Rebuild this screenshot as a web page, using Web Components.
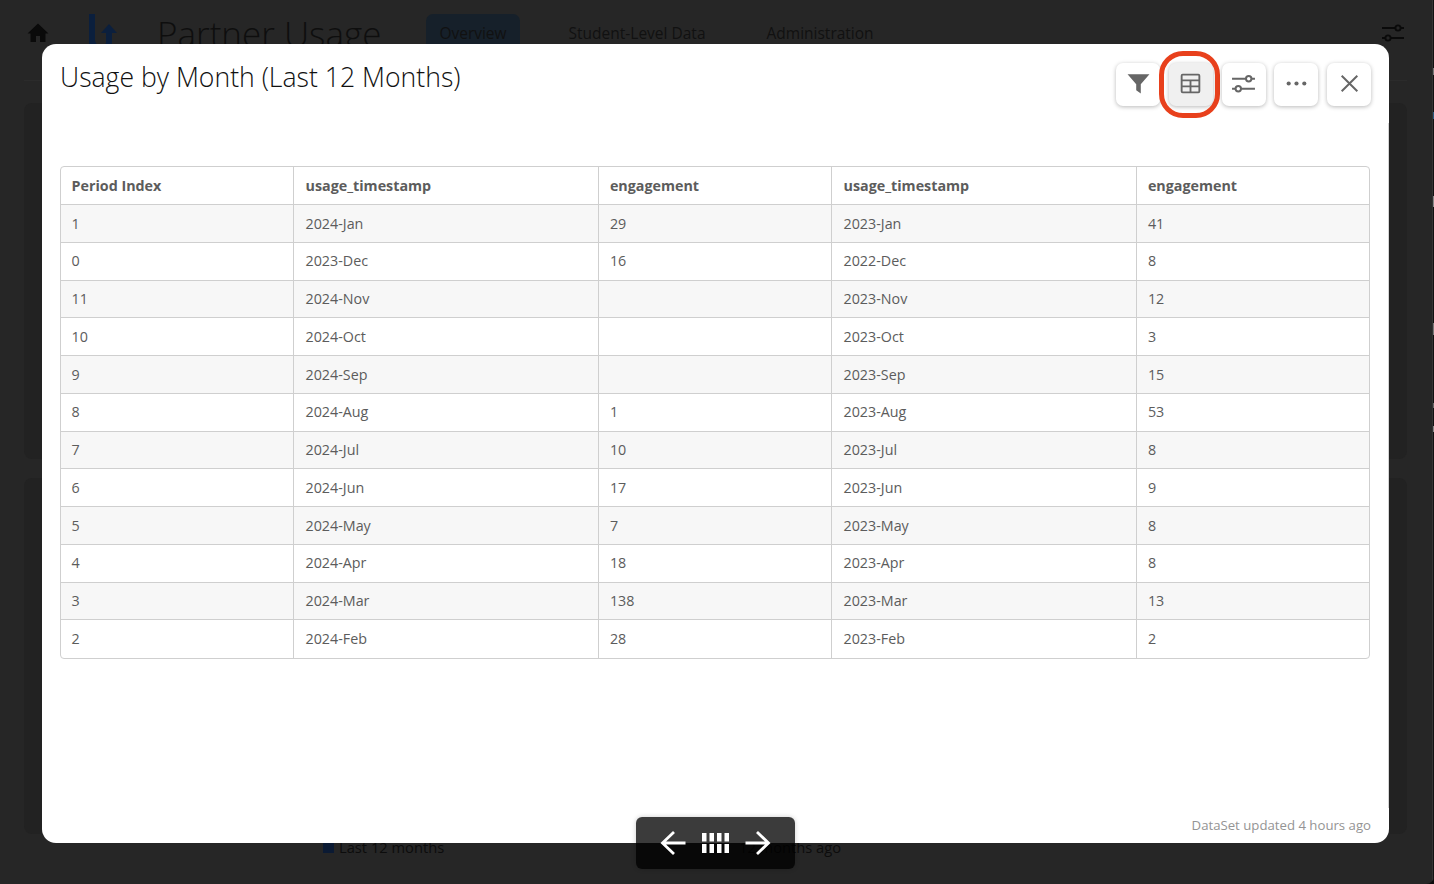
<!DOCTYPE html>
<html>
<head>
<meta charset="utf-8">
<title>Usage by Month</title>
<style>
html, body { margin: 0; height: 100%; overflow: hidden; background: #0d0d0d; font-family: "Open Sans", "Liberation Sans", sans-serif; }
</style>
</head>
<body>
<partner-page>
  <usage-modal heading="Usage by Month (Last 12 Months)" footnote="DataSet updated 4 hours ago">
    <modal-button slot="actions" icon="filter"></modal-button>
    <modal-button slot="actions" icon="table" active></modal-button>
    <modal-button slot="actions" icon="sliders"></modal-button>
    <modal-button slot="actions" icon="more"></modal-button>
    <modal-button slot="actions" icon="close"></modal-button>
    <usage-table></usage-table>
  </usage-modal>
  <slide-nav></slide-nav>
</partner-page>

<script>
const ICONS = {
    filter: '<path d="M1.500 3h21l-8.300 9.700v8.800l-4.400-3v-5.800z" fill="#666"/>',
    table: '<g fill="none" stroke="#666" stroke-width="1.800"><rect x="3.500" y="3.500" width="17" height="17" rx="1"/><path d="M3.500 9h17M3.500 14.800h17M12 9v11.500"/></g>',
    sliders: '<g fill="none" stroke="#666" stroke-width="1.900"><path d="M1 7.500h13.500M19.500 7.500H23M1 17h3.500M9.500 17H23"/><circle cx="17" cy="7.500" r="2.600"/><circle cx="7" cy="17" r="2.600"/></g>',
    more: '<g fill="#666"><circle cx="4.500" cy="12" r="2"/><circle cx="12" cy="12" r="2"/><circle cx="19.500" cy="12" r="2"/></g>',
    close: '<path d="M4.500 4.500l15 15M19.500 4.500l-15 15" fill="none" stroke="#666" stroke-width="1.900"/>'
};

class PartnerPage extends HTMLElement {
    constructor() {
        super();
        this.attachShadow({ mode: 'open' });
    }

    connectedCallback() {
        this.shadowRoot.innerHTML = `
            <style>
                :host {
                    display: block;
                    position: relative;
                    width: 1434px;
                    height: 884px;
                    overflow: hidden;
                    color: #0c0c0c;
                    background: #262626;
                    border-bottom-right-radius: 8px;
                }
                header {
                    display: flex;
                    align-items: center;
                    height: 66px;
                    padding: 0 29px 0 27px;
                    box-sizing: border-box;
                }
                .logo { margin-left: 40px; }
                h1 {
                    margin: 0 0 -1px 38px;
                    font-size: 35px;
                    font-weight: 300;
                    color: #0e0e0e;
                    white-space: nowrap;
                }
                nav { display: flex; margin-left: 45px; font-size: 15.500px; }
                nav span { padding: 0 13px; height: 38px; line-height: 38px; margin-right: 35px; color: #111; }
                nav .on { background: #16202a; border-radius: 7px; margin-right: 36px; }
                .spacer { flex: 1; }
                .rule { height: 1px; margin: 14px 27px 0 24px; background: #2b2b2b; }
                .body { padding: 22px 27px 0 24px; }
                .card {
                    height: 356px;
                    margin-bottom: 19px;
                    border-radius: 8px;
                    background: #222;
                }
                .legend {
                    display: flex;
                    align-items: center;
                    gap: 5px;
                    position: absolute;
                    top: 837px;
                    left: 323px;
                    font-size: 14.700px;
                    line-height: 20px;
                }
                .legend i { width: 11px; height: 11px; background: #0b1a33; }
                .ago { position: absolute; top: 837px; left: 739px; font-size: 14.700px; line-height: 20px; }
                /* edge of the window behind this one */
                .edge {
                    position: absolute;
                    top: 0;
                    right: 0;
                    bottom: 0;
                    width: 1px;
                    border-left: 1px solid #343434;
                    background: linear-gradient(#111 0 68px, #777 68px 75px, #111 75px 112px, #2a5a80 112px 119px,
                        #111 119px 196px, #888 196px 207px, #111 207px 323px, #777 323px 335px,
                        #111 335px 403px, #666 403px 408px, #111 408px 426px, #888 426px 432px, #111 432px);
                }
                ::slotted(usage-modal) { position: absolute; left: 42px; top: 44px; }
                ::slotted(slide-nav) { position: absolute; left: 636px; top: 817px; }
            </style>
            <header>
                <svg width="22" height="22" viewBox="0 0 22 22"><path d="M11 1.500L.5 11.500h3V20h5.500v-6h4v6H18.500v-8.500h3z" fill="#0a0a0a"/></svg>
                <svg class="logo" width="30" height="38" viewBox="0 0 30 38">
                    <path d="M0 0h6v26a6 6 0 0 0 12 0v-2h5v4a10 10 0 0 1-10 10H9a9 9 0 0 1-9-9z" fill="#0b1f3d"/>
                    <path d="M20 10l8 9h-5v10h-6V19h-5z" fill="#0b1f3d"/>
                </svg>
                <h1>Partner Usage</h1>
                <nav>
                    <span class="on">Overview</span>
                    <span>Student-Level Data</span>
                    <span>Administration</span>
                </nav>
                <div class="spacer"></div>
                <svg width="24" height="24" viewBox="0 0 24 24"><g fill="none" stroke="#0a0a0a" stroke-width="1.900"><path d="M1 7h13.500M19.500 7H23M1 17h3.500M9.500 17H23"/><circle cx="17" cy="7" r="2.600"/><circle cx="7" cy="17" r="2.600"/></g></svg>
            </header>
            <div class="rule"></div>
            <div class="body">
                <div class="card"></div>
                <div class="card"></div>
            </div>
            <div class="legend"><i></i><span>Last 12 months</span></div>
            <div class="ago">12 months ago</div>
            <div class="edge"></div>
            <slot></slot>
        `;
    }
}

class UsageModal extends HTMLElement {
    constructor() {
        super();
        this.attachShadow({ mode: 'open' });
    }

    connectedCallback() {
        const heading = this.getAttribute('heading') || '';
        const footnote = this.getAttribute('footnote') || '';
        this.shadowRoot.innerHTML = `
            <style>
                :host {
                    display: flex;
                    flex-direction: column;
                    width: 1347px;
                    height: 799px;
                    box-sizing: border-box;
                    padding: 0 19px 0 18px;
                    background: #fff;
                    border-radius: 14px;
                }
                :host::after {
                    content: "";
                    position: absolute;
                    right: 0;
                    top: 79px;
                    width: 1px;
                    height: 685px;
                    background: #d4d4d4;
                }
                .top {
                    display: flex;
                    justify-content: space-between;
                    align-items: flex-start;
                    height: 122px;
                }
                h2 {
                    margin: 13px 0 0;
                    font-size: 26.600px;
                    line-height: 40px;
                    font-weight: 300;
                    color: #111;
                }
                .actions { display: flex; gap: 8.750px; margin-top: 19px; margin-right: -1px; }
                .content { flex: 1; }
                footer {
                    display: flex;
                    justify-content: flex-end;
                    margin: 0 -1px 8px 0;
                    font-size: 13.200px;
                    line-height: 20px;
                    color: #949494;
                }
            </style>
            <div class="top">
                <h2>${heading}</h2>
                <div class="actions"><slot name="actions"></slot></div>
            </div>
            <div class="content"><slot></slot></div>
            <footer>${footnote}</footer>
        `;
    }
}

class ModalButton extends HTMLElement {
    constructor() {
        super();
        this.attachShadow({ mode: 'open' });
    }

    connectedCallback() {
        const icon = this.getAttribute('icon');
        this.shadowRoot.innerHTML = `
            <style>
                :host {
                    display: flex;
                    position: relative;
                    align-items: center;
                    justify-content: center;
                    width: 44px;
                    height: 43px;
                    border-radius: 7px;
                    background: #fff;
                    box-shadow: 0 1px 4px rgba(0, 0, 0, .28);
                }
                :host([active]) { background: #f0f0f0; }
                :host([active])::after {
                    content: "";
                    position: absolute;
                    left: -10px;
                    top: -12px;
                    width: 61px;
                    height: 67px;
                    box-sizing: border-box;
                    border: 5px solid #e8401c;
                    border-radius: 24px;
                }
                svg { display: block; margin-bottom: 2px; }
            </style>
            <svg width="25" height="25" viewBox="0 0 24 24">${ICONS[icon]}</svg>
        `;
    }
}

class UsageTable extends HTMLElement {
    constructor() {
        super();
        this.attachShadow({ mode: 'open' });
    }

    connectedCallback() {
        const head = ['Period Index', 'usage_timestamp', 'engagement', 'usage_timestamp', 'engagement'];
        const rows = [
            ['1', '2024-Jan', '29', '2023-Jan', '41'],
            ['0', '2023-Dec', '16', '2022-Dec', '8'],
            ['11', '2024-Nov', '', '2023-Nov', '12'],
            ['10', '2024-Oct', '', '2023-Oct', '3'],
            ['9', '2024-Sep', '', '2023-Sep', '15'],
            ['8', '2024-Aug', '1', '2023-Aug', '53'],
            ['7', '2024-Jul', '10', '2023-Jul', '8'],
            ['6', '2024-Jun', '17', '2023-Jun', '9'],
            ['5', '2024-May', '7', '2023-May', '8'],
            ['4', '2024-Apr', '18', '2023-Apr', '8'],
            ['3', '2024-Mar', '138', '2023-Mar', '13'],
            ['2', '2024-Feb', '28', '2023-Feb', '2']
        ];
        const cells = (row, tag) => row.map(c => `<${tag}>${c}</${tag}>`).join('');
        this.shadowRoot.innerHTML = `
            <style>
                :host {
                    display: block;
                    width: 1310px;
                    border: 1px solid #cfcfcf;
                    border-radius: 4px;
                    box-sizing: border-box;
                    overflow: hidden;
                    font-size: 14.300px;
                    color: #5c5c5c;
                }
                table { width: 100%; border-collapse: collapse; table-layout: fixed; }
                th, td {
                    height: 37.750px;
                    padding: 0 11.400px 0.600px;
                    box-sizing: border-box;
                    border-left: 1px solid #cfcfcf;
                    border-top: 1px solid #cfcfcf;
                    text-align: left;
                    font-weight: 400;
                }
                th { font-weight: 700; border-top: 0; height: 37.500px; }
                th:first-child, td:first-child { border-left: 0; padding-left: 10.500px; }
                th:nth-child(2), td:nth-child(2), th:nth-child(4), td:nth-child(4) { padding-left: 12px; }
                tbody tr:nth-child(odd) { background: #f7f7f7; }
            </style>
            <table>
                <colgroup>
                    <col style="width:232px"><col style="width:305px"><col style="width:233px"><col style="width:305px"><col>
                </colgroup>
                <thead><tr>${cells(head, 'th')}</tr></thead>
                <tbody>${rows.map(r => `<tr>${cells(r, 'td')}</tr>`).join('')}</tbody>
            </table>
        `;
    }
}

class SlideNav extends HTMLElement {
    constructor() {
        super();
        this.attachShadow({ mode: 'open' });
    }

    connectedCallback() {
        const bars = [0, 1, 2, 3].map(i =>
            `<rect x="${i * 7.500}" y="0" width="4.500" height="8.500"/><rect x="${i * 7.500}" y="11" width="4.500" height="9"/>`
        ).join('');
        this.shadowRoot.innerHTML = `
            <style>
                :host {
                    display: flex;
                    align-items: center;
                    justify-content: center;
                    gap: 15px;
                    width: 159px;
                    height: 52px;
                    border-radius: 6px;
                    background: rgba(0, 0, 0, .77);
                    box-shadow: 0 0 5px rgba(0, 0, 0, .2);
                }
                svg { display: block; }
            </style>
            <svg width="27" height="26" viewBox="0 0 27 26"><path d="M25.500 13H3M14 2L2.500 13 14 24" fill="none" stroke="#fff" stroke-width="2.800"/></svg>
            <svg width="27" height="20" viewBox="0 0 27 20" fill="#fff">${bars}</svg>
            <svg width="27" height="26" viewBox="0 0 27 26"><path d="M1.500 13H24M13 2l11.500 11L13 24" fill="none" stroke="#fff" stroke-width="2.800"/></svg>
        `;
    }
}

customElements.define('partner-page', PartnerPage);
customElements.define('usage-modal', UsageModal);
customElements.define('modal-button', ModalButton);
customElements.define('usage-table', UsageTable);
customElements.define('slide-nav', SlideNav);
</script>
</body>
</html>
